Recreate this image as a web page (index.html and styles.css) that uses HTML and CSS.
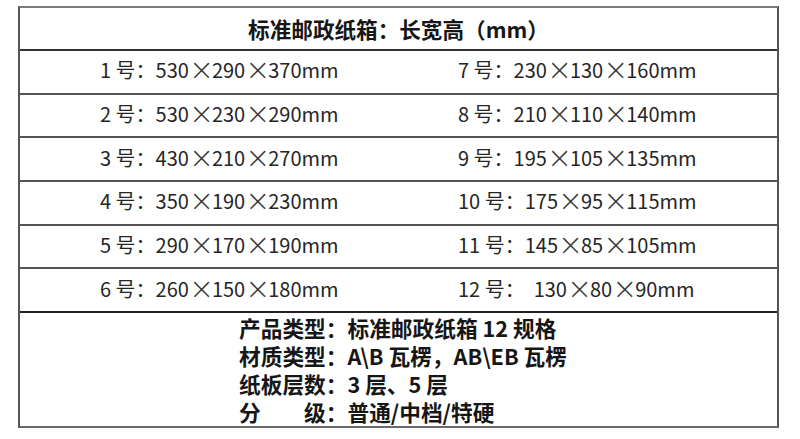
FILE: index.html
```html
<!DOCTYPE html>
<html lang="zh-CN">
<head>
<meta charset="utf-8">
<title>标准邮政纸箱</title>
<link rel="stylesheet" href="styles.css">
</head>
<body>
<div class="sheet">
  <div class="table">
    <div class="head">标准邮政纸箱：长宽高（mm）</div>
    <div class="row">
      <div class="cell left">1 号：530<span class="x">×</span>290<span class="x">×</span>370mm</div>
      <div class="cell right">7 号：230<span class="x">×</span>130<span class="x">×</span>160mm</div>
    </div>
    <div class="row">
      <div class="cell left">2 号：530<span class="x">×</span>230<span class="x">×</span>290mm</div>
      <div class="cell right">8 号：210<span class="x">×</span>110<span class="x">×</span>140mm</div>
    </div>
    <div class="row">
      <div class="cell left">3 号：430<span class="x">×</span>210<span class="x">×</span>270mm</div>
      <div class="cell right">9 号：195<span class="x">×</span>105<span class="x">×</span>135mm</div>
    </div>
    <div class="row">
      <div class="cell left">4 号：350<span class="x">×</span>190<span class="x">×</span>230mm</div>
      <div class="cell right">10 号：175<span class="x">×</span>95<span class="x">×</span>115mm</div>
    </div>
    <div class="row">
      <div class="cell left">5 号：290<span class="x">×</span>170<span class="x">×</span>190mm</div>
      <div class="cell right">11 号：145<span class="x">×</span>85<span class="x">×</span>105mm</div>
    </div>
    <div class="row last">
      <div class="cell left">6 号：260<span class="x">×</span>150<span class="x">×</span>180mm</div>
      <div class="cell right">12 号：&nbsp;&nbsp;130<span class="x">×</span>80<span class="x">×</span>90mm</div>
    </div>
    <div class="info">
      <p>产品类型：标准邮政纸箱 12 规格</p>
      <p>材质类型：A\B 瓦楞，AB\EB 瓦楞</p>
      <p>纸板层数：3 层、5 层</p>
      <p>分　　级：普通/中档/特硬</p>
    </div>
  </div>
</div>
</body>
</html>
```

FILE: styles.css
```css
html, body {
  margin: 0;
  padding: 0;
  background: #ffffff;
}

body {
  font-family: "Noto Sans CJK SC", "Noto Sans", sans-serif;
  color: #1e1e1e;
}

.sheet {
  padding: 6px 0 0 18px;
}

.table {
  width: 761px;
  box-sizing: border-box;
  border: 2px solid #555;
  border-top-color: #7a7a7a;
  border-bottom-color: #6a6a6a;
}

.head {
  height: 41px;
  border-bottom: 2px solid #333;
  display: flex;
  align-items: center;
  justify-content: center;
  font-size: 21.6px;
  font-weight: 700;
  line-height: 1;
  color: #161616;
}

.row {
  height: 41.67px;
  border-bottom: 2px solid #555;
  display: grid;
  grid-template-columns: 1fr 1fr;
  align-items: center;
}

.row.last {
  border-bottom-color: #222;
}

.cell {
  font-size: 20px;
  line-height: 1;
  white-space: nowrap;
  color: #262626;
  padding-bottom: 3px;
}

.left {
  padding-left: 80px;
}

.right {
  padding-left: 59.5px;
}

.x {
  display: inline-block;
  width: 23px;
  text-align: center;
  font-family: "DejaVu Sans", sans-serif;
  font-weight: 200;
  font-size: 30px;
  line-height: 20px;
  vertical-align: top;
  color: #3a3a3a;
}

.info {
  height: 113px;
  box-sizing: border-box;
  padding: 1px 0 0 219px;
}

.info p {
  margin: 0;
  font-size: 21.7px;
  line-height: 28px;
  font-weight: 700;
  white-space: nowrap;
  color: #161616;
}
```
